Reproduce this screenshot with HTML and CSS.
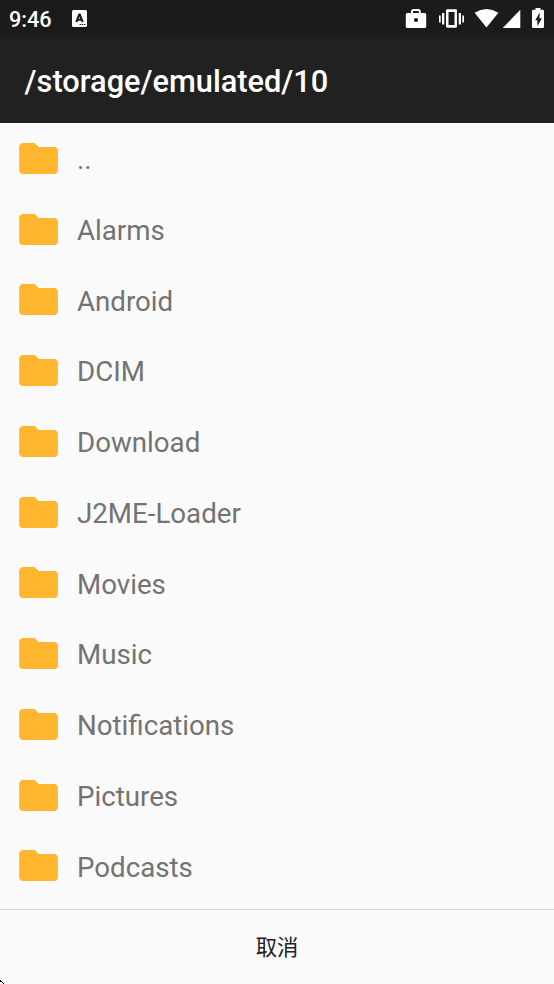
FILE: index.html
```html
<!DOCTYPE html>
<html lang="zh-CN">
<head>
<meta charset="utf-8">
<title>/storage/emulated/10</title>
<link rel="stylesheet" href="styles.css">
</head>
<body>
<svg class="defs" aria-hidden="true"><symbol id="folder" viewBox="2 4 20 16"><path d="M10 4H4c-1.1 0-1.99.9-1.99 2L2 18c0 1.1.9 2 2 2h16c1.1 0 2-.9 2-2V8c0-1.1-.9-2-2-2h-8l-2-2z"/></symbol></svg>
<div class="status">
  <span class="time">9:46</span>
  <svg class="notice" width="15" height="17" viewBox="0 0 15 17"><rect width="15" height="17" rx="1.5" fill="#fff"/><path d="M4.3 12.2 7.2 4.6h.6l2.9 7.6M5.3 9.8h4.4" fill="none" stroke="#1b1b1b" stroke-width="2.1"/><path d="M7.5 14.5H9m.7 0h1.5m.7 0h1.5" stroke="#1b1b1b" stroke-width="1.2"/></svg>
  <svg class="system" width="144" height="24" viewBox="404 6 144 24">
    <path fill="#fff" fill-rule="evenodd" d="M407.3 13H411v-2.2l1.6-1.8h6.6l1.6 1.8V13h3.9q1.5 0 1.5 1.5v12q0 1.5-1.5 1.5h-17.4q-1.5 0-1.500-1.500v-12q0-1.500 1.500-1.500zm5.700 0h5.800v-2H413zm3 4.900a2.100 2.100 0 1 0 0 4.200 2.100 2.100 0 0 0 0-4.200z"/>
    <path fill="#fff" fill-rule="evenodd" d="M447.500 9.300h8q1.500 0 1.500 1.300v15.800q0 1.300-1.500 1.300h-8q-1.500 0-1.500-1.300V10.600q0-1.300 1.500-1.300zM448.500 12v13h6V12zM439 15.500h1.700v7H439zm3-2.500h2.300v11.500H442zm16.700 0h2.300v11.500h-2.300zm3.600 2.500h1.700v7h-1.700zM474.600 12.700q11.900-7.400 23.800 0L486.500 27.600zM502.700 28l17.600-18.300V28z"/>
    <path fill="#fff" fill-rule="evenodd" d="M533.600 9.800h1.900V8h5v1.800h2q1.500 0 1.500 1.300v15.600q0 1.300-1.500 1.300h-9q-1.500 0-1.500-1.300V11.100q0-1.300 1.600-1.300zM539.800 12.400l-4.600 7.900h2.200v5.900l4.500-7.900h-2.500z"/>
  </svg>
</div>
<header class="title">/storage/emulated/10</header>
<ul class="list">
  <li><svg class="folder"><use href="#folder"/></svg><span>..</span></li>
  <li><svg class="folder"><use href="#folder"/></svg><span>Alarms</span></li>
  <li><svg class="folder"><use href="#folder"/></svg><span>Android</span></li>
  <li><svg class="folder"><use href="#folder"/></svg><span>DCIM</span></li>
  <li><svg class="folder"><use href="#folder"/></svg><span>Download</span></li>
  <li><svg class="folder"><use href="#folder"/></svg><span>J2ME-Loader</span></li>
  <li><svg class="folder"><use href="#folder"/></svg><span>Movies</span></li>
  <li><svg class="folder"><use href="#folder"/></svg><span>Music</span></li>
  <li><svg class="folder"><use href="#folder"/></svg><span>Notifications</span></li>
  <li><svg class="folder"><use href="#folder"/></svg><span>Pictures</span></li>
  <li><svg class="folder"><use href="#folder"/></svg><span>Podcasts</span></li>
</ul>
<footer class="cancel">取消</footer>
<svg class="corner" width="4" height="4" viewBox="0 0 4 4"><path d="M0 0h1v1h1v1h1v1h1v1H3V3H2V2H0z"/></svg>
</body>
</html>
```
FILE: styles.css
```css
* { box-sizing: border-box; }
body {
  margin: 0;
  width: 554px;
  height: 984px;
  overflow: hidden;
  display: flex;
  flex-direction: column;
  background: #fafafa;
  font-family: Roboto, "Noto Sans CJK SC", sans-serif;
}
.defs { position: absolute; width: 0; height: 0; }
.status {
  height: 37px;
  flex: none;
  display: flex;
  align-items: flex-start;
  background: #1b1b1b;
  color: #fff;
  padding: 0 6px 0 9px;
}
.time {
  width: 63px;
  font-size: 21.7px;
  line-height: 40px;
  font-weight: 500;
}
.notice { margin-top: 10px; }
.system { margin: 6px 0 0 auto; }
.title {
  height: 86px;
  flex: none;
  padding-left: 24.6px;
  background: #212121;
  color: #fff;
  font-size: 30.75px;
  font-weight: 500;
  line-height: 90px;
}
.list {
  list-style: none;
  margin: 0;
  padding: 0;
  height: 786px;
  flex: none;
}
.list li {
  height: 70.75px;
  display: flex;
  align-items: center;
  gap: 19px;
  padding-left: 19px;
  font-size: 27.7px;
  color: #737373;
}
.folder { width: 39px; height: 31px; fill: #ffb52e; }
.list span { line-height: 34px; margin-top: 3.4px; }
.cancel {
  flex: 1;
  border-top: 1px solid #dcdcdc;
  color: #212121;
  text-align: center;
  font-size: 21.3px;
  line-height: 76px;
}
.corner { position: absolute; left: 0; bottom: 0; }
```
